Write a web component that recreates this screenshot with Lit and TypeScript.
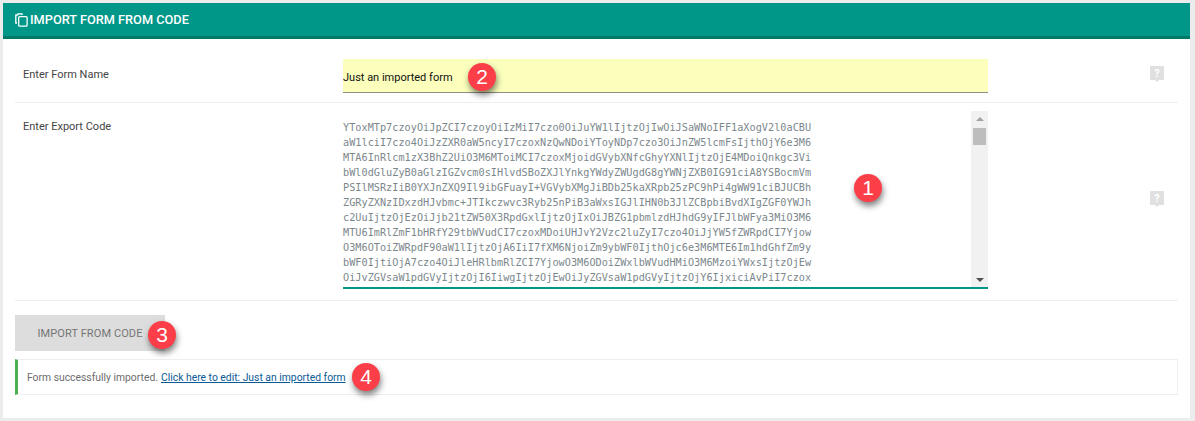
import { LitElement, html, css, svg } from "lit";
import { customElement } from "lit/decorators.js";

const CODE = [
  "YToxMTp7czoyOiJpZCI7czoyOiIzMiI7czo0OiJuYW1lIjtzOjIwOiJSaWNoIFF1aXogV2l0aCBU",
  "aW1lciI7czo4OiJzZXR0aW5ncyI7czoxNzQwNDoiYToyNDp7czo3OiJnZW5lcmFsIjthOjY6e3M6",
  "MTA6InRlcm1zX3BhZ2UiO3M6MToiMCI7czoxMjoidGVybXNfcGhyYXNlIjtzOjE4MDoiQnkgc3Vi",
  "bWl0dGluZyB0aGlzIGZvcm0sIHlvdSBoZXJlYnkgYWdyZWUgdG8gYWNjZXB0IG91ciA8YSBocmVm",
  "PSIlMSRzIiB0YXJnZXQ9Il9ibGFuayI+VGVybXMgJiBDb25kaXRpb25zPC9hPi4gWW91ciBJUCBh",
  "ZGRyZXNzIDxzdHJvbmc+JTIkczwvc3Ryb25nPiB3aWxsIGJlIHN0b3JlZCBpbiBvdXIgZGF0YWJh",
  "c2UuIjtzOjEzOiJjb21tZW50X3RpdGxlIjtzOjIxOiJBZG1pbmlzdHJhdG9yIFJlbWFya3MiO3M6",
  "MTU6ImRlZmF1bHRfY29tbWVudCI7czoxMDoiUHJvY2Vzc2luZyI7czo4OiJjYW5fZWRpdCI7Yjow",
  "O3M6OToiZWRpdF90aW1lIjtzOjA6IiI7fXM6NjoiZm9ybWF0IjthOjc6e3M6MTE6Im1hdGhfZm9y",
  "bWF0IjtiOjA7czo4OiJleHRlbmRlZCI7YjowO3M6ODoiZWxlbWVudHMiO3M6MzoiYWxsIjtzOjEw",
  "OiJvZGVsaW1pdGVyIjtzOjI6IiwgIjtzOjEwOiJyZGVsaW1pdGVyIjtzOjY6IjxiciAvPiI7czox",
];

const helpIcon = svg`<svg class="help" width="14" height="18" viewBox="0 0 14 18"><path fill="#e0e0e0" d="M1 1h12a1 1 0 0 1 1 1v12a1 1 0 0 1-1 1H9l-2 2-2-2H1a1 1 0 0 1-1-1V2a1 1 0 0 1 1-1z"/><text x="7" y="12" text-anchor="middle" font-family="Roboto, sans-serif" font-size="11" font-weight="700" fill="#fff">?</text></svg>`;

@customElement("app-root")
export class AppRoot extends LitElement {
  static styles = css`
    :host { display: block; width: 1195px; height: 421px; overflow: hidden; background: #ececec; font-family: Roboto, sans-serif; }
    .page { padding: 3px 5px 0 3px; box-sizing: border-box; height: 421px; }
    .card { position: relative; background: #fff; height: 415px; box-sizing: border-box; }
    .head { height: 33px; background: #009688; border-bottom: 3px solid #00796b; display: flex; align-items: center; padding-left: 12px; gap: 2px; color: #fff; font-size: 12.75px; font-weight: 500; }
    .head svg { display: block; }
    .row { display: grid; grid-template-columns: 328px 645px 1fr; margin: 0 12px; border-bottom: 1px solid #eee; box-sizing: border-box; }
    .r1 { height: 64px; padding-top: 20px; }
    .r2 { height: 198px; padding-top: 8px; }
    .label { font-size: 11px; color: #444; padding-left: 8px; line-height: 15px; }
    .r1 .label { padding-top: 8px; }
    .r2 .label { padding-top: 8px; }
    .input { height: 34px; box-sizing: border-box; background: #fbffbb; border-bottom: 1px solid #8d8d80; font-size: 11px; line-height: 35px; padding-top: 1px; color: #111; }
    .area { height: 178px; box-sizing: border-box; border-bottom: 2px solid #009688; display: flex; justify-content: space-between; }
    .code { font-family: "DejaVu Sans Mono", monospace; font-size: 10.2px; letter-spacing: 0.026px; line-height: 15px; color: #7c878c; padding-top: 9px; white-space: pre; }
    .bar { width: 17px; background: #f1f1f1; display: flex; flex-direction: column; align-items: center; }
    .arrow-u { margin-top: 6px; width: 0; height: 0; border-left: 4px solid transparent; border-right: 4px solid transparent; border-bottom: 4px solid #a3a3a3; }
    .thumb { margin-top: 7px; width: 13px; height: 17px; background: #bdbdbd; }
    .arrow-d { margin-top: auto; margin-bottom: 5px; width: 0; height: 0; border-left: 4px solid transparent; border-right: 4px solid transparent; border-top: 4px solid #505050; }
    .help-wrap { display: flex; justify-content: flex-end; padding-right: 14px; }
    .r1 .help-wrap { padding-top: 6px; }
    .r2 .help-wrap { padding-top: 79px; }
    .btn { margin: 14px 0 0 12px; width: 150px; height: 36px; background: #dddddd; color: #757575; font-size: 11px; letter-spacing: 0.1px; display: flex; align-items: center; justify-content: center; }
    .notice { margin: 8px 12px 0; height: 36px; box-sizing: border-box; border: 1px solid #eee; border-left: 3px solid #4caf50; display: flex; align-items: center; padding-left: 9px; font-size: 10.35px; color: #6d6d6d; }
    .notice a { color: #0a5a96; text-decoration: underline; margin-left: 3px; }
    .badge { position: absolute; width: 28px; height: 28px; border-radius: 50%; background: #fb3e47; color: #fff; font-family: "Liberation Sans", sans-serif; font-size: 21px; line-height: 28px; text-align: center; box-shadow: 1px 4px 6px rgba(0,0,0,0.5); }
  `;

  render() {
    return html`<div class="page"><div class="card">
      <div class="head">
        <svg width="13" height="14" viewBox="0 0 13 14" fill="none" stroke="#fff" stroke-width="1.3"><path d="M2 10H.8V2h2M3 2V.8h4V2"/><rect x="3.7" y="3.6" width="8.4" height="9.6" rx="1"/></svg>
        <span>IMPORT FORM FROM CODE</span>
      </div>
      <div class="row r1">
        <div class="label">Enter Form Name</div>
        <div class="input">Just an imported form</div>
        <div class="help-wrap">${helpIcon}</div>
      </div>
      <div class="row r2">
        <div class="label">Enter Export Code</div>
        <div class="area">
          <div class="code">${CODE.join("\n")}</div>
          <div class="bar"><div class="arrow-u"></div><div class="thumb"></div><div class="arrow-d"></div></div>
        </div>
        <div class="help-wrap">${helpIcon}</div>
      </div>
      <div class="btn">IMPORT FROM CODE</div>
      <div class="notice">Form successfully imported. <a>Click here to edit: Just an imported form</a></div>
      <div class="badge" style="left:851px;top:171px">1</div>
      <div class="badge" style="left:465px;top:60px">2</div>
      <div class="badge" style="left:145px;top:318px">3</div>
      <div class="badge" style="left:349px;top:360px">4</div>
    </div></div>`;
  }
}
